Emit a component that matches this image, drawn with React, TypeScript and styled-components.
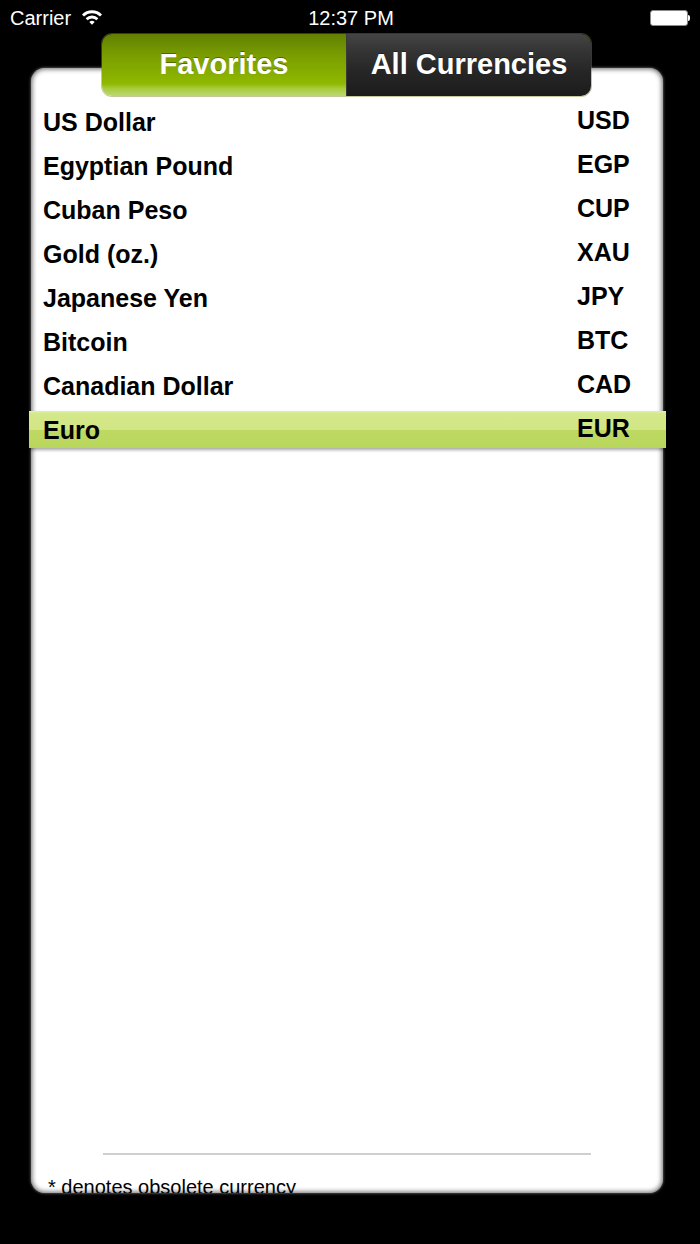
import styled, { createGlobalStyle } from "styled-components";

const GlobalStyle = createGlobalStyle`
    html, body {
        margin: 0;
        padding: 0;
        background: #000;
    }
    body {
        font-family: "Liberation Sans", Arial, sans-serif;
    }
`;

type Currency = { name: string; code: string };

const currencies: Currency[] = [
    { name: "US Dollar", code: "USD" },
    { name: "Egyptian Pound", code: "EGP" },
    { name: "Cuban Peso", code: "CUP" },
    { name: "Gold (oz.)", code: "XAU" },
    { name: "Japanese Yen", code: "JPY" },
    { name: "Bitcoin", code: "BTC" },
    { name: "Canadian Dollar", code: "CAD" },
    { name: "Euro", code: "EUR" },
];

const selectedCode = "EUR";

const WifiIcon = () => (
    <svg width="22" height="16" viewBox="0 0 22 16">
        <path d="M1 5.5 A14 14 0 0 1 21 5.5 L19 7.6 A11 11 0 0 0 3 7.6 Z" fill="#fff" />
        <path d="M4.6 9.2 A9 9 0 0 1 17.4 9.2 L15.4 11.3 A6.2 6.2 0 0 0 6.6 11.3 Z" fill="#fff" />
        <path d="M8.3 13 A4 4 0 0 1 13.7 13 L11 15.8 Z" fill="#fff" />
    </svg>
);

export default function App() {
    return (
        <Screen>
            <GlobalStyle />
            <StatusBar>
                <Carrier>
                    Carrier
                    <WifiIcon />
                </Carrier>
                <Clock>12:37 PM</Clock>
                <Battery>
                    <BatteryBody />
                    <BatteryNub />
                </Battery>
            </StatusBar>

            <Tabs>
                <Tab active>Favorites</Tab>
                <Tab>All Currencies</Tab>
            </Tabs>

            <Card>
                <List>
                    {currencies.map((c) => (
                        <Row key={c.code} selected={c.code === selectedCode}>
                            <Name>{c.name}</Name>
                            <Code>{c.code}</Code>
                        </Row>
                    ))}
                </List>
                <Spacer />
                <Divider />
                <FooterClip>
                    <Footer>* denotes obsolete currency</Footer>
                </FooterClip>
            </Card>
        </Screen>
    );
}

const Screen = styled.div`
    height: 1244px;
    background: #000;
    display: flex;
    flex-direction: column;
    overflow: hidden;
`;

const StatusBar = styled.div`
    height: 34px;
    display: grid;
    grid-template-columns: 1fr auto 1fr;
    align-items: center;
    padding: 2px 10px 0 10px;
    box-sizing: border-box;
    color: #fff;
    font-size: 20px;
`;

const Carrier = styled.div`
    display: flex;
    align-items: center;
    gap: 10px;

    svg {
        margin-top: -3px;
    }
`;

const Clock = styled.div`
    text-align: center;
    padding-left: 2px;
`;

const Battery = styled.div`
    justify-self: end;
    display: flex;
    align-items: center;
`;

const BatteryBody = styled.div`
    width: 36px;
    height: 14px;
    background: #fff;
    border: 1px solid #8a8a8a;
    border-radius: 3px;
`;

const BatteryNub = styled.div`
    width: 2px;
    height: 6px;
    background: #fff;
    border-radius: 0 2px 2px 0;
`;

const Tabs = styled.div`
    position: relative;
    z-index: 2;
    align-self: flex-start;
    margin-left: 102px;
    width: 489px;
    height: 62px;
    display: flex;
    border-radius: 10px;
    overflow: hidden;
    box-shadow: 0 0 0 1px rgba(120, 140, 40, 0.45);
`;

const Tab = styled.div<{ active?: boolean }>`
    flex: 1;
    display: flex;
    align-items: center;
    justify-content: center;
    color: #fff;
    font-weight: bold;
    font-size: 29px;
    padding-bottom: 1px;
    text-shadow: 0 -1px 0 rgba(0, 0, 0, 0.35);
    background: ${(p) =>
        p.active
            ? "linear-gradient(to bottom, #627f02 0%, #7a9e00 35%, #8fb800 80%, #a7cc3c 88%, #bcd872 100%)"
            : "linear-gradient(to bottom, #444 0%, #333 30%, #262626 60%, #1c1c1c 100%)"};
    border-left: ${(p) => (p.active ? "none" : "1px solid #3a3a3a")};
`;

const Card = styled.div`
    flex: 1;
    margin: -28px 37px 51px 31px;
    background: #fff;
    border-radius: 14px;
    display: flex;
    flex-direction: column;
    padding-top: 32px;
    box-shadow:
        inset 0 0 5px 1px rgba(0, 0, 0, 0.6),
        0 0 3px rgba(255, 255, 255, 0.55);
`;

const List = styled.div`
    display: flex;
    flex-direction: column;
`;

const Row = styled.div<{ selected?: boolean }>`
    position: relative;
    height: 44px;
    display: flex;
    align-items: center;
    padding-left: 12px;
    font-size: 25px;
    font-weight: bold;
    color: #000;

    &::before {
        content: "";
        display: ${(p) => (p.selected ? "block" : "none")};
        position: absolute;
        top: 3px;
        bottom: 4px;
        left: -2px;
        right: -3px;
        background: linear-gradient(
            to bottom,
            #e2f0a8 0%,
            #d4e88a 8%,
            #d2e685 50%,
            #bdd962 52%,
            #b9d65c 100%
        );
        box-shadow: 0 2px 3px rgba(0, 0, 0, 0.35);
    }
`;

const Name = styled.span`
    position: relative;
    flex: 1;
`;

const Code = styled.span`
    position: relative;
    width: 86px;
    padding-bottom: 4px;
`;

const Spacer = styled.div`
    flex: 1;
`;

const Divider = styled.div`
    height: 2px;
    margin: 0 72px;
    background: #cfcfcf;
`;

const FooterClip = styled.div`
    height: 18px;
    margin-top: 20px;
    overflow: hidden;
    padding-left: 17px;
`;

const Footer = styled.div`
    font-size: 20px;
    line-height: 24px;
    color: #000;
`;
